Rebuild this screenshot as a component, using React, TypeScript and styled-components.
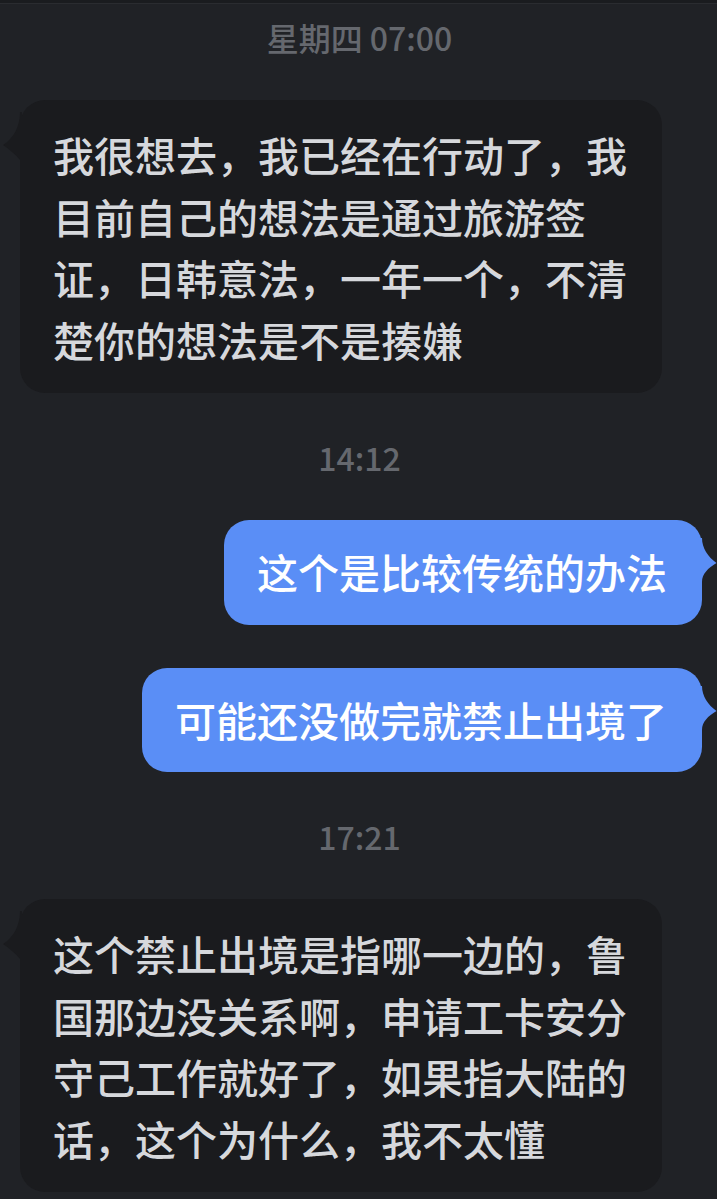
import styled, { createGlobalStyle } from "styled-components";

const GlobalStyle = createGlobalStyle`
  html, body {
    margin: 0;
    padding: 0;
    background: #202226;
  }
  body {
    font-family: "Noto Sans CJK SC", "Noto Sans", sans-serif;
  }
`;

type Side = "left" | "right";

type Item =
  | { kind: "time"; text: string }
  | { kind: "msg"; side: Side; lines: string[] };

const items: Item[] = [
  { kind: "time", text: "星期四 07:00" },
  {
    kind: "msg",
    side: "left",
    lines: [
      "我很想去，我已经在行动了，我",
      "目前自己的想法是通过旅游签",
      "证，日韩意法，一年一个，不清",
      "楚你的想法是不是揍嫌",
    ],
  },
  { kind: "time", text: "14:12" },
  { kind: "msg", side: "right", lines: ["这个是比较传统的办法"] },
  { kind: "msg", side: "right", lines: ["可能还没做完就禁止出境了"] },
  { kind: "time", text: "17:21" },
  {
    kind: "msg",
    side: "left",
    lines: [
      "这个禁止出境是指哪一边的，鲁",
      "国那边没关系啊，申请工卡安分",
      "守己工作就好了，如果指大陆的",
      "话，这个为什么，我不太懂",
    ],
  },
];

function Tail({ side }: { side: Side }) {
  if (side === "left") {
    return (
      <LeftTail width="20" height="48" viewBox="0 0 20 48">
        <path d="M20 0 L18 0 C18 14 12 26 1 33 C8 38 13 42 18 48 L20 48 Z" fill="#1a1b1e" />
      </LeftTail>
    );
  }
  return (
    <RightTail width="17" height="44" viewBox="0 0 17 44">
      <path d="M0 0 L2 0 C2 10 8 19 16.5 25 C8 30 2 36 2 44 L0 44 Z" fill="#5a8ef6" />
    </RightTail>
  );
}

export default function App() {
  return (
    <>
      <GlobalStyle />
      <Page>
        {items.map((item, i) =>
          item.kind === "time" ? (
            <Stamp key={i}>{item.text}</Stamp>
          ) : (
            <Row key={i} $side={item.side}>
              <Bubble $side={item.side}>
                <Tail side={item.side} />
                {item.lines.map((line, j) => (
                  <Line key={j}>{line}</Line>
                ))}
              </Bubble>
            </Row>
          )
        )}
      </Page>
    </>
  );
}

const Page = styled.div`
  width: 717px;
  min-height: 1199px;
  box-sizing: border-box;
  background: #202226;
  border-top: 3px solid #1a1c1f;
  box-shadow: inset 0 1px 0 #2a2c30;
  padding: 14px 15px 0 20px;
  display: flex;
  flex-direction: column;
  gap: 43px;
`;

const Stamp = styled.div`
  height: 40px;
  line-height: 40px;
  text-align: center;
  font-size: 32px;
  font-weight: 500;
  color: #65686e;
  margin-right: 3px;
  &:not(:first-child) {
    margin-top: 1px;
  }
`;

const Row = styled.div<{ $side: Side }>`
  display: flex;
  justify-content: ${(p) => (p.$side === "left" ? "flex-start" : "flex-end")};
`;

const Bubble = styled.div<{ $side: Side }>`
  position: relative;
  box-sizing: border-box;
  padding: ${(p) => (p.$side === "left" ? "24px 35px 23px 33px" : "21px 35px 22px 33px")};
  border-radius: 25px;
  background: ${(p) => (p.$side === "left" ? "#1a1b1e" : "#5a8ef6")};
  color: ${(p) => (p.$side === "left" ? "#d6d8dc" : "#ffffff")};
  font-size: 41px;
  font-weight: 500;
  line-height: 61.5px;
  white-space: nowrap;
`;

const Line = styled.div``;

const LeftTail = styled.svg`
  position: absolute;
  left: -18px;
  top: 12px;
  display: block;
`;

const RightTail = styled.svg`
  position: absolute;
  right: -15px;
  top: 18px;
  display: block;
`;
